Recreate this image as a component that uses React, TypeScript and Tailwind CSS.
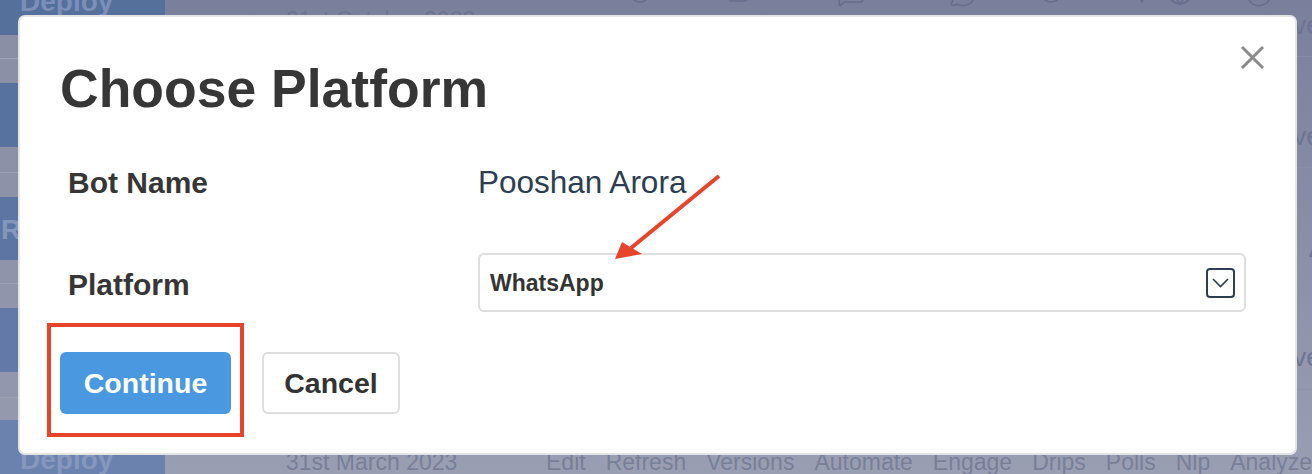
import {
  CircleHelp,
  Square,
  MessageSquare,
  MessageCircle,
  CircleUser,
  Send,
  Globe,
  Clock,
} from "lucide-react";

// Sidebar bands behind the dialog overlay (height, colour, divider line)
const sidebarBands = [
  { h: "h-[35px]", c: "bg-[#56709c]", line: false },
  { h: "h-[23px]", c: "bg-[#8b8fa6]", line: false },
  { h: "h-[25px]", c: "bg-[#8c90a7]", line: true },
  { h: "h-[64px]", c: "bg-[#58729f]", line: false },
  { h: "h-[25px]", c: "bg-[#8d91a8]", line: false },
  { h: "h-[25px]", c: "bg-[#8e92a9]", line: true },
  { h: "h-[63px]", c: "bg-[#5d75a3]", line: false },
  { h: "h-[23px]", c: "bg-[#9094aa]", line: false },
  { h: "h-[25px]", c: "bg-[#9195ab]", line: true },
  { h: "h-[64px]", c: "bg-[#637aa8]", line: false },
  { h: "h-[25px]", c: "bg-[#9397ad]", line: false },
  { h: "h-[23px]", c: "bg-[#9599ae]", line: true },
  { h: "h-[54px]", c: "bg-[#6c82ae]", line: false },
];

const rowActions = ["Edit", "Refresh", "Versions", "Automate", "Engage", "Drips", "Polls", "Nlp", "Analyze"];

function Sidebar() {
  return (
    <div className="flex w-[165px] shrink-0 flex-col">
      {sidebarBands.map((b, i) => (
        <div
          key={i}
          className={`${b.h} ${b.c} ${b.line ? "border-t border-[#9ea1b4]" : ""} overflow-hidden`}
        >
          {i === 0 && (
            <div className="-mt-[12px] pl-[20px] text-[28px] font-bold leading-none text-[#7b8fb8]">Deploy</div>
          )}
          {i === 6 && (
            <div className="mt-[19px] pl-[1px] text-[28px] font-bold leading-none text-[#8396bd]">Re</div>
          )}
          {i === 12 && (
            <div className="mt-[26px] pl-[20px] text-[28px] font-bold leading-none text-[#8597bd]">Deploy</div>
          )}
        </div>
      ))}
    </div>
  );
}

function MainTable() {
  return (
    <div className="flex flex-1 flex-col bg-linear-to-b from-[#7a809c] to-[#9a9eb3] text-[#6e7490]">
      <div className="flex h-[58px] border-b border-[#878ca4]">
        <div className="w-[381px] shrink-0 pl-[121px] pt-[9px] text-[23px] leading-none">21st October 2023</div>
        <div className="-mt-[20px] flex items-start text-[#686e8b]">
          <CircleHelp size={24} strokeWidth={1.5} className="ml-[82px]" />
          <Square size={24} strokeWidth={1.5} className="ml-[74px]" />
          <MessageSquare size={28} strokeWidth={1.5} className="ml-[87px]" />
          <MessageCircle size={28} strokeWidth={1.5} className="ml-[84px]" />
          <CircleUser size={24} strokeWidth={1.5} className="ml-[62px]" />
          <Send size={24} strokeWidth={1.5} className="ml-[64px]" />
          <Globe size={26} strokeWidth={1.5} className="ml-[16px]" />
          <Clock size={28} strokeWidth={1.5} className="ml-[52px]" />
        </div>
        <div className="ml-auto pr-[2px] pt-[12px] text-[26px] leading-none">Live</div>
      </div>
      <div className="flex h-[112px] border-b border-[#898ea6]">
        <div className="ml-auto pr-[2px] pt-[66px] text-[26px] leading-none">Live</div>
      </div>
      <div className="flex h-[113px] border-b border-[#8c91a8]">
        <div className="ml-auto w-[14px] overflow-hidden whitespace-nowrap pt-[60px] text-[34px] leading-none">Active</div>
      </div>
      <div className="flex h-[112px] border-b border-[#8e93aa]">
        <div className="ml-auto pr-[2px] pt-[65px] text-[26px] leading-none">Live</div>
      </div>
      <div className="flex flex-1 items-start pt-[61px] text-[23px] leading-none text-[#7a7f98]">
        <div className="w-[381px] shrink-0 pl-[121px]">31st March 2023</div>
        <div className="flex gap-[20px]">
          {rowActions.map((a) => (
            <span key={a}>{a}</span>
          ))}
        </div>
      </div>
    </div>
  );
}

function PlatformDialog() {
  return (
    <div className="absolute left-[18px] top-[15px] h-[440px] w-[1279px] rounded-[7px] border-2 border-[#e4e4e7] bg-white pl-[40px] pt-[45px]">
      <button className="absolute right-[30px] top-[28px] h-[25px] w-[25px]" aria-label="Close">
        <svg width="25" height="25" viewBox="0 0 25 25" fill="none">
          <path d="M2 2 L23 23 M23 2 L2 23" stroke="#8a8a8a" strokeWidth="3" />
        </svg>
      </button>

      <h2 className="text-[53.5px] font-bold leading-none text-[#363636]">Choose Platform</h2>

      <div className="mt-[51px] flex items-baseline">
        <div className="ml-[8px] w-[410px] text-[30px] font-bold leading-none text-[#363636]">Bot Name</div>
        <div className="text-[31.5px] leading-none text-[#2c3e50]">Pooshan Arora</div>
      </div>

      <div className="mt-[55px] flex items-center">
        <div className="ml-[8px] w-[410px] pt-[5px] text-[30px] font-bold leading-none text-[#363636]">Platform</div>
        <div className="flex h-[59px] w-[768px] items-center justify-between rounded-[6px] border-2 border-[#dedede] pl-[10px] pr-[9px]">
          <span className="pt-[2px] text-[23px] font-bold leading-none text-[#333]">WhatsApp</span>
          <span className="flex h-[30px] w-[29px] items-center justify-center rounded-[4px] border-2 border-[#2c3e50]">
            <svg width="17" height="10" viewBox="0 0 17 10" fill="none">
              <path d="M1 1 L8.5 8.5 L16 1" stroke="#2c3e50" strokeWidth="1.6" />
            </svg>
          </span>
        </div>
      </div>

      <div className="mt-[40px] flex gap-[31px]">
        <button className="h-[62px] w-[171px] rounded-[6px] bg-[#4a98e0] text-[28.5px] font-bold text-white">
          Continue
        </button>
        <button className="h-[62px] w-[138px] rounded-[6px] border-2 border-[#dedede] bg-white text-[28.5px] font-bold text-[#333]">
          Cancel
        </button>
      </div>
    </div>
  );
}

export default function App() {
  return (
    <div className="relative flex h-[474px] w-[1312px] overflow-hidden font-['Liberation_Sans',Arial,sans-serif]">
      <Sidebar />
      <MainTable />
      <PlatformDialog />

      {/* callouts drawn over the dialog */}
      <div className="pointer-events-none absolute left-[47px] top-[323px] h-[114px] w-[197px] border-4 border-[#e8442b]" />
      <svg className="pointer-events-none absolute left-0 top-0" width="1312" height="474">
        <line x1="719" y1="176" x2="631" y2="248" stroke="#e8442b" strokeWidth="4" />
        <polygon points="615,259 622,242 642,254" fill="#e8442b" />
      </svg>
    </div>
  );
}
